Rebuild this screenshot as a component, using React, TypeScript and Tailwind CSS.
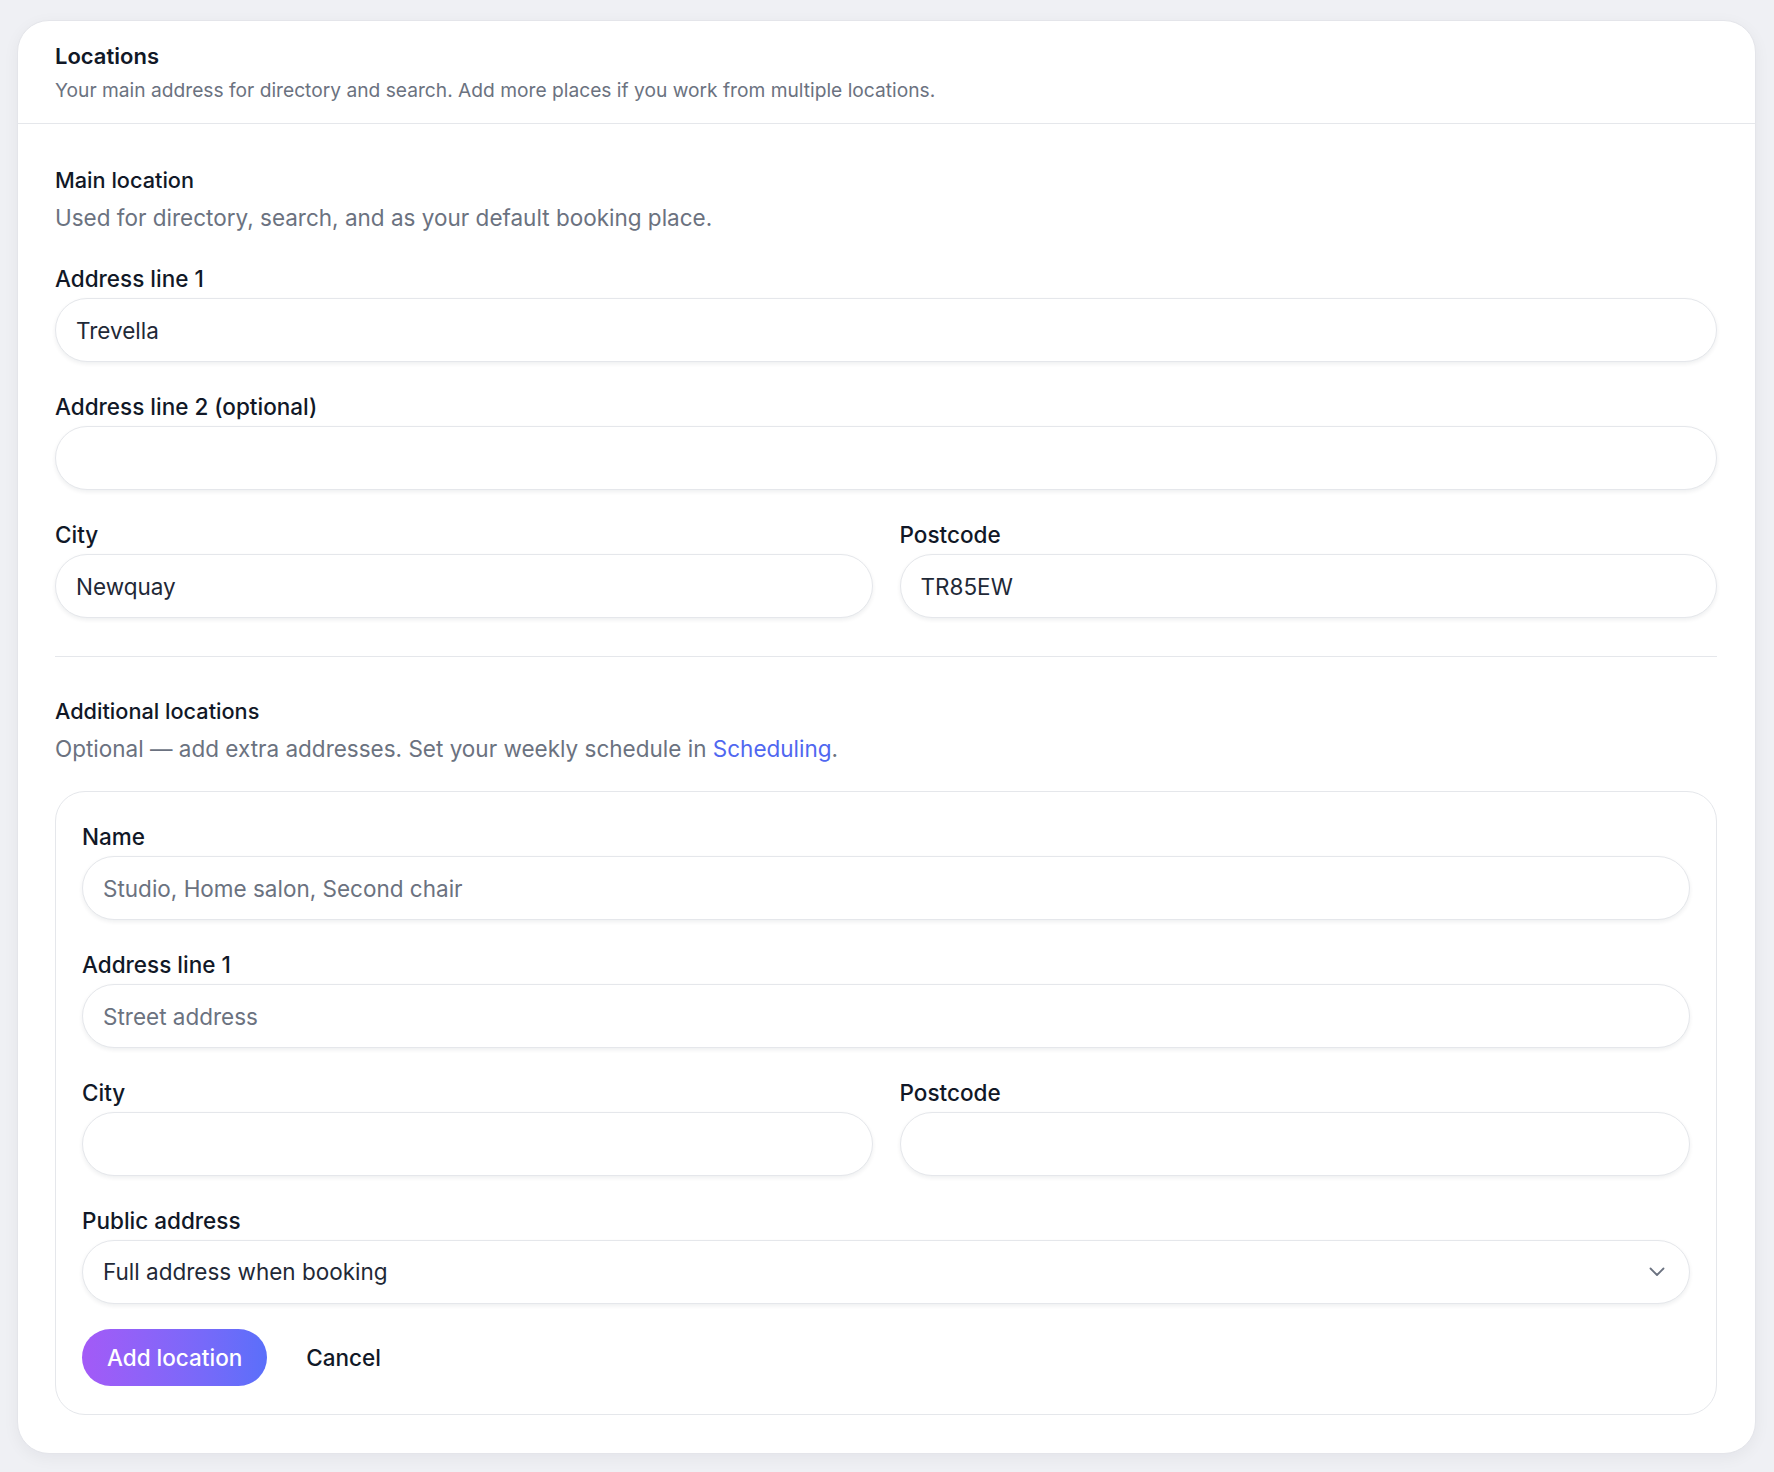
import React from "react";

function Label({ children }: { children: React.ReactNode }) {
  return (
    <label className="block text-[22.5px] font-medium leading-[30px] text-[#111827]">
      {children}
    </label>
  );
}

function Field({
  label,
  value,
  placeholder,
}: {
  label: string;
  value?: string;
  placeholder?: string;
}) {
  return (
    <div className="flex flex-col gap-[4px]">
      <Label>{label}</Label>
      <input
        readOnly
        value={value ?? ""}
        placeholder={placeholder}
        className="h-[64px] w-full rounded-full border border-[#e5e7eb] bg-white px-[20px] text-[22.5px] text-[#1f2937] shadow-[0_2px_4px_rgba(15,23,42,0.07)] outline-none placeholder:text-[#6b7280]"
      />
    </div>
  );
}

export default function App() {
  return (
    <div className="min-h-screen bg-[#eff0f4] pl-[17px] pr-[18px] py-[20px] font-['Inter',sans-serif]">
      <div className="rounded-[32px] border border-[#e4e5ea] bg-white shadow-[0_4px_16px_rgba(15,23,42,0.05)]">
        <div className="border-b border-[#e5e7eb] pl-[37px] pr-[38px] pt-[20px] pb-[20px]">
          <h2 className="text-[22px] font-semibold leading-[30px] text-[#111827]">Locations</h2>
          <p className="mt-[6px] text-[19.2px] leading-[26px] text-[#6b7280]">
            Your main address for directory and search. Add more places if you work from multiple locations.
          </p>
        </div>

        <div className="pl-[37px] pr-[38px] pt-[41px] pb-[38px]">
          <section>
            <h3 className="text-[21.7px] font-medium leading-[30px] text-[#111827]">Main location</h3>
            <p className="mt-[8px] text-[22.5px] leading-[30px] text-[#6b7280]">
              Used for directory, search, and as your default booking place.
            </p>
            <div className="mt-[31px] flex flex-col gap-[30px]">
              <Field label="Address line 1" value="Trevella" />
              <Field label="Address line 2 (optional)" />
              <div className="grid grid-cols-2 gap-[27px]">
                <Field label="City" value="Newquay" />
                <Field label="Postcode" value="TR85EW" />
              </div>
            </div>
          </section>

          <div className="mt-[38px] mb-[39px] h-px bg-[#e5e7eb]" />

          <section>
            <h3 className="text-[21.7px] font-medium leading-[30px] text-[#111827]">Additional locations</h3>
            <p className="mt-[8px] text-[22.5px] leading-[30px] text-[#6b7280]">
              Optional — add extra addresses. Set your weekly schedule in{" "}
              <a className="text-[#5067f0]" href="#">
                Scheduling
              </a>
              .
            </p>

            <div className="mt-[27px] rounded-[30px] border border-[#e5e7eb] px-[26px] pt-[30px] pb-[28px]">
              <div className="flex flex-col gap-[30px]">
                <Field label="Name" placeholder="Studio, Home salon, Second chair" />
                <Field label="Address line 1" placeholder="Street address" />
                <div className="grid grid-cols-2 gap-[27px]">
                  <Field label="City" />
                  <Field label="Postcode" />
                </div>
                <div className="flex flex-col gap-[4px]">
                  <Label>Public address</Label>
                  <div className="flex h-[64px] w-full items-center justify-between rounded-full border border-[#e5e7eb] bg-white pl-[20px] pr-[24px] text-[22.5px] text-[#1f2937] shadow-[0_2px_4px_rgba(15,23,42,0.07)]">
                    <span>Full address when booking</span>
                    <svg width="16" height="10" viewBox="0 0 16 10" fill="none">
                      <path
                        d="M1.5 1.5L8 8L14.5 1.5"
                        stroke="#6b7280"
                        strokeWidth="1.8"
                        strokeLinecap="round"
                        strokeLinejoin="round"
                      />
                    </svg>
                  </div>
                </div>
              </div>

              <div className="mt-[25px] flex items-center gap-[39px]">
                <button className="h-[57px] rounded-full bg-gradient-to-r from-[#a35af7] to-[#5a6ffa] px-[25px] text-[22.5px] font-medium text-white">
                  Add location
                </button>
                <button className="text-[22.5px] font-medium text-[#111827]">Cancel</button>
              </div>
            </div>
          </section>
        </div>
      </div>
    </div>
  );
}
